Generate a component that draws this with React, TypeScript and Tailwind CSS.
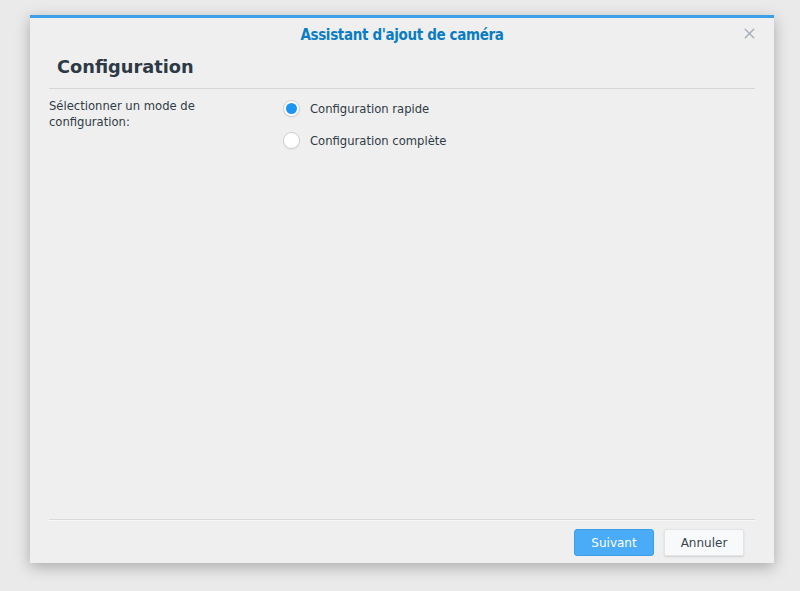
import { X } from "lucide-react"

const font = { fontFamily: '"DejaVu Sans", Verdana, sans-serif' }

function Radio({ checked, label }: { checked?: boolean; label: string }) {
  return (
    <label className="flex items-center gap-[10px] h-[17px] cursor-pointer">
      <span className="w-[17px] h-[17px] rounded-full bg-white border border-[#c9ced3] flex items-center justify-center shadow-[0_1px_1px_rgba(0,0,0,0.05)]">
        {checked && <span className="w-[11px] h-[11px] rounded-full bg-[#1d96f3]" />}
      </span>
      <span className="text-[11.6px] text-[#2f3c46] pt-[2px]">{label}</span>
    </label>
  )
}

export default function App() {
  return (
    <div className="w-[800px] h-[591px] bg-[#eaeaea] pt-[15px] pl-[30px]" style={font}>
      {/* Dialog */}
      <div className="w-[744px] h-[548px] bg-[#efefef] border-t-[3px] border-[#3c9ee6] shadow-[0_4px_14px_rgba(0,0,0,0.28)] flex flex-col">
        {/* Title bar */}
        <div className="relative h-[34px] flex items-center justify-center">
          <span className="text-[15px] font-bold text-[#0a7dc2] tracking-[-0.35px]" style={{ fontFamily: '"DejaVu Sans Condensed", "DejaVu Sans", sans-serif' }}>
            Assistant d'ajout de caméra
          </span>
          <button className="absolute right-[16px] top-[7px] text-[#a6b0ba]">
            <X className="w-[17px] h-[17px]" strokeWidth={2} />
          </button>
        </div>

        {/* Heading */}
        <div className="px-[19px]">
          <h1 className="pl-[8px] h-[36px] pb-[6px] flex items-center text-[17.8px] font-bold text-[#2d3a45]">Configuration</h1>
          <div className="h-px bg-[#d6d6d6]" />
        </div>

        {/* Body */}
        <div className="flex-1 px-[19px] pt-[9px] flex">
          <div className="w-[234px] text-[11.6px] leading-[16px] text-[#2f3c46]">
            Sélectionner un mode de
            <br />
            configuration:
          </div>
          <div className="flex flex-col gap-[15px] pt-[2px]">
            <Radio checked label="Configuration rapide" />
            <Radio label="Configuration complète" />
          </div>
        </div>

        {/* Footer */}
        <div className="px-[19px]">
          <div className="h-[2px] bg-[#d9d9d9] border-b border-[#f7f7f7]" />
          <div className="flex justify-end gap-[10px] pt-[8px] pb-[7px] pr-[11px]">
            <button className="w-[80px] h-[27px] rounded-[3px] bg-[#4aabf7] border border-[#3c9ee6] text-white text-[12px]">
              Suivant
            </button>
            <button className="w-[80px] h-[27px] rounded-[2px] bg-[#f8f9fb] border border-[#e2e4e6] shadow-[0_1px_2px_rgba(0,0,0,0.12)] text-[#3a444d] text-[12px]">
              Annuler
            </button>
          </div>
        </div>
      </div>
    </div>
  )
}
